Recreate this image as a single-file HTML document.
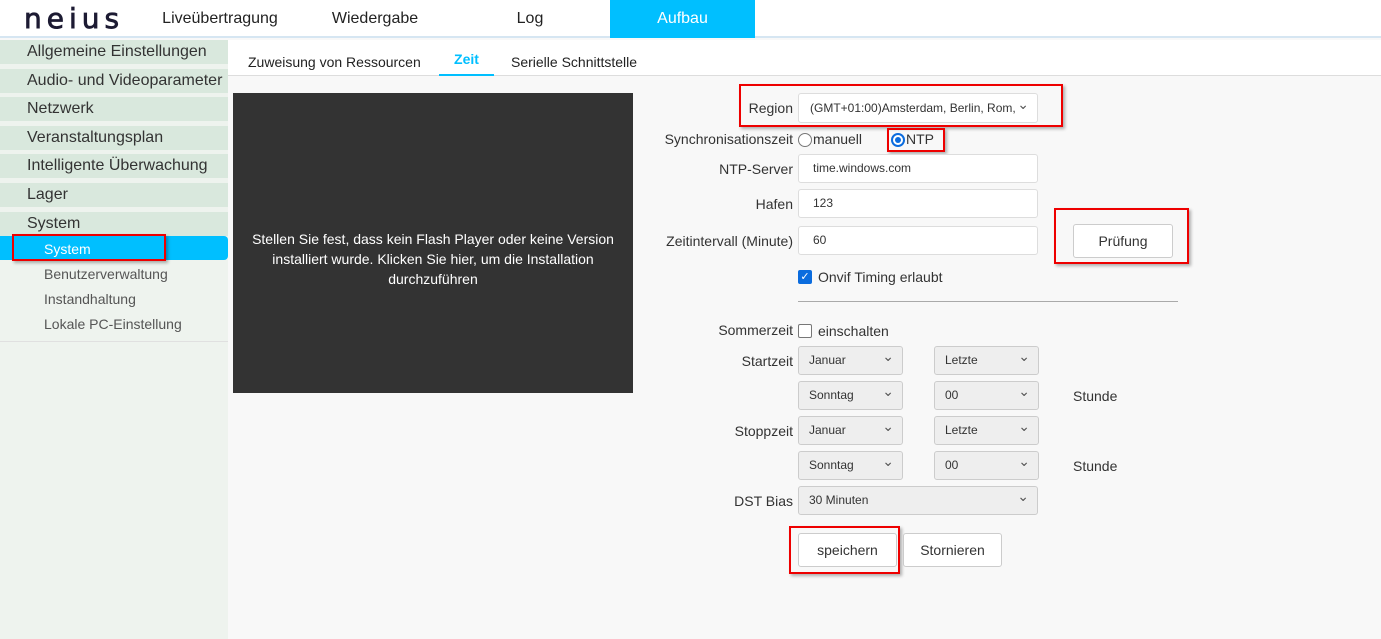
<!DOCTYPE html><html><head><meta charset="utf-8"><style>
*{box-sizing:border-box;margin:0;padding:0}
body{width:1381px;height:639px;overflow:hidden;background:#f8f8f8;font-family:"Liberation Sans",Arial,sans-serif;color:#333;position:relative}
.a{position:absolute}
.hdr{left:0;top:0;width:1381px;height:38px;background:#fff;border-bottom:2px solid #d6e6f2}
.nav{top:0;height:38px;line-height:37px;font-size:16px;color:#222;text-align:center}
.side{left:0;top:40px;width:228px;height:599px;background:#eef3ee}
.it{left:0;width:228px;height:24px;background:#d9e8dd;font-size:16px;line-height:23px;padding-left:27px;color:#333}
.sub{font-size:14px;color:#555;left:44px}
.lbl{font-size:14px;color:#333;text-align:right;width:200px;left:593px}
.inp{background:#fff;border:1px solid #ddd;border-radius:3px;font-size:12px;padding-left:14px;color:#333}
.sel{background:#eee;border:1px solid #ccc;border-radius:3px;font-size:12px;padding-left:10px;height:29px;line-height:27px}
.sel:after,.chev:after{content:"⌄";position:absolute;right:8px;top:-4px;font-size:14px;color:#555}
.btn{background:#fff;border:1px solid #ccc;border-radius:3px;font-size:14px;text-align:center}
.red{border:2px solid #e00;box-shadow:2px 2px 3px rgba(0,0,0,.3)}
</style></head><body>
<div class="a hdr"></div>
<div class="a" style="left:24px;top:2px;font-size:28px;letter-spacing:5px;color:#1d1b33;font-weight:normal;-webkit-text-stroke:0.8px #1d1b33;font-family:'DejaVu Sans',sans-serif">neius</div>
<div class="a nav" style="left:150px;width:140px">Liveübertragung</div>
<div class="a nav" style="left:310px;width:130px">Wiedergabe</div>
<div class="a nav" style="left:480px;width:100px">Log</div>
<div class="a nav" style="left:610px;width:145px;background:#00bfff;color:#fff">Aufbau</div>
<div class="a side"></div>
<div class="a it" style="top:40px">Allgemeine Einstellungen</div>
<div class="a it" style="top:69px">Audio- und Videoparameter</div>
<div class="a it" style="top:97px">Netzwerk</div>
<div class="a it" style="top:126px">Veranstaltungsplan</div>
<div class="a it" style="top:154px">Intelligente Überwachung</div>
<div class="a it" style="top:183px">Lager</div>
<div class="a it" style="top:212px">System</div>
<div class="a" style="left:0;top:236px;width:228px;height:24px;background:#00bfff;border-radius:0 4px 4px 0"></div>
<div class="a red" style="left:12px;top:234px;width:154px;height:27px"></div>
<div class="a sub" style="top:241px;color:#fff">System</div>
<div class="a sub" style="top:266px">Benutzerverwaltung</div>
<div class="a sub" style="top:291px">Instandhaltung</div>
<div class="a sub" style="top:316px">Lokale PC-Einstellung</div>
<div class="a" style="left:0;top:341px;width:228px;height:1px;background:#e0e0e0"></div>
<div class="a" style="left:228px;top:40px;width:1153px;height:36px;background:#fff;border-bottom:1px solid #ddd"></div>
<div class="a" style="left:248px;top:54px;font-size:14px;color:#222">Zuweisung von Ressourcen</div>
<div class="a" style="left:439px;top:51px;width:55px;font-size:14px;color:#00bfff;font-weight:bold;text-align:center;height:25px;border-bottom:2px solid #00bfff">Zeit</div>
<div class="a" style="left:511px;top:54px;font-size:14px;color:#222">Serielle Schnittstelle</div>
<div class="a" style="left:233px;top:93px;width:400px;height:300px;background:#333;color:#fff;font-size:14px;text-align:center;line-height:20px;padding:136px 10px 0">Stellen Sie fest, dass kein Flash Player oder keine Version installiert wurde. Klicken Sie hier, um die Installation durchzuführen</div>
<div class="a red" style="left:739px;top:84px;width:324px;height:43px"></div>
<div class="a lbl" style="top:100px">Region</div>
<div class="a inp chev" style="left:798px;top:93px;width:240px;height:30px;line-height:28px;padding-left:11px">(GMT+01:00)Amsterdam, Berlin, Rom,</div>
<div class="a lbl" style="top:131px">Synchronisationszeit</div>
<div class="a" style="left:798px;top:133px;width:14px;height:14px;border:1px solid #777;border-radius:50%;background:#fff"></div>
<div class="a" style="left:813px;top:131px;font-size:14px">manuell</div>
<div class="a red" style="left:887px;top:128px;width:58px;height:24px"></div>
<div class="a" style="left:891px;top:133px;width:14px;height:14px;border:2px solid #0b6cde;border-radius:50%;background:#fff"><div style="margin:2px;width:6px;height:6px;border-radius:50%;background:#0b6cde"></div></div>
<div class="a" style="left:906px;top:131px;font-size:14px">NTP</div>
<div class="a lbl" style="top:161px">NTP-Server</div>
<div class="a inp" style="left:798px;top:154px;width:240px;height:29px;line-height:27px">time.windows.com</div>
<div class="a lbl" style="top:196px">Hafen</div>
<div class="a inp" style="left:798px;top:189px;width:240px;height:29px;line-height:27px">123</div>
<div class="a lbl" style="top:233px">Zeitintervall (Minute)</div>
<div class="a inp" style="left:798px;top:226px;width:240px;height:29px;line-height:27px">60</div>
<div class="a red" style="left:1054px;top:208px;width:135px;height:56px"></div>
<div class="a btn" style="left:1073px;top:224px;width:100px;height:34px;line-height:32px">Prüfung</div>
<div class="a" style="left:798px;top:270px;width:14px;height:14px;background:#0b6cde;border-radius:2px;color:#fff;font-size:11px;line-height:14px;text-align:center">✓</div>
<div class="a" style="left:818px;top:269px;font-size:14px">Onvif Timing erlaubt</div>
<div class="a" style="left:798px;top:301px;width:380px;height:1px;background:#aaa"></div>
<div class="a lbl" style="top:322px">Sommerzeit</div>
<div class="a" style="left:798px;top:324px;width:14px;height:14px;border:1px solid #777;border-radius:2px;background:#fff"></div>
<div class="a" style="left:818px;top:323px;font-size:14px">einschalten</div>
<div class="a lbl" style="top:353px">Startzeit</div>
<div class="a sel" style="left:798px;top:346px;width:105px">Januar</div>
<div class="a sel" style="left:934px;top:346px;width:105px">Letzte</div>
<div class="a sel" style="left:798px;top:381px;width:105px">Sonntag</div>
<div class="a sel" style="left:934px;top:381px;width:105px">00</div>
<div class="a" style="left:1073px;top:388px;font-size:14px">Stunde</div>
<div class="a lbl" style="top:423px">Stoppzeit</div>
<div class="a sel" style="left:798px;top:416px;width:105px">Januar</div>
<div class="a sel" style="left:934px;top:416px;width:105px">Letzte</div>
<div class="a sel" style="left:798px;top:451px;width:105px">Sonntag</div>
<div class="a sel" style="left:934px;top:451px;width:105px">00</div>
<div class="a" style="left:1073px;top:458px;font-size:14px">Stunde</div>
<div class="a lbl" style="top:493px">DST Bias</div>
<div class="a sel" style="left:798px;top:486px;width:240px">30 Minuten</div>
<div class="a red" style="left:789px;top:526px;width:111px;height:48px"></div>
<div class="a btn" style="left:798px;top:533px;width:99px;height:34px;line-height:32px">speichern</div>
<div class="a btn" style="left:903px;top:533px;width:99px;height:34px;line-height:32px">Stornieren</div>
</body></html>
